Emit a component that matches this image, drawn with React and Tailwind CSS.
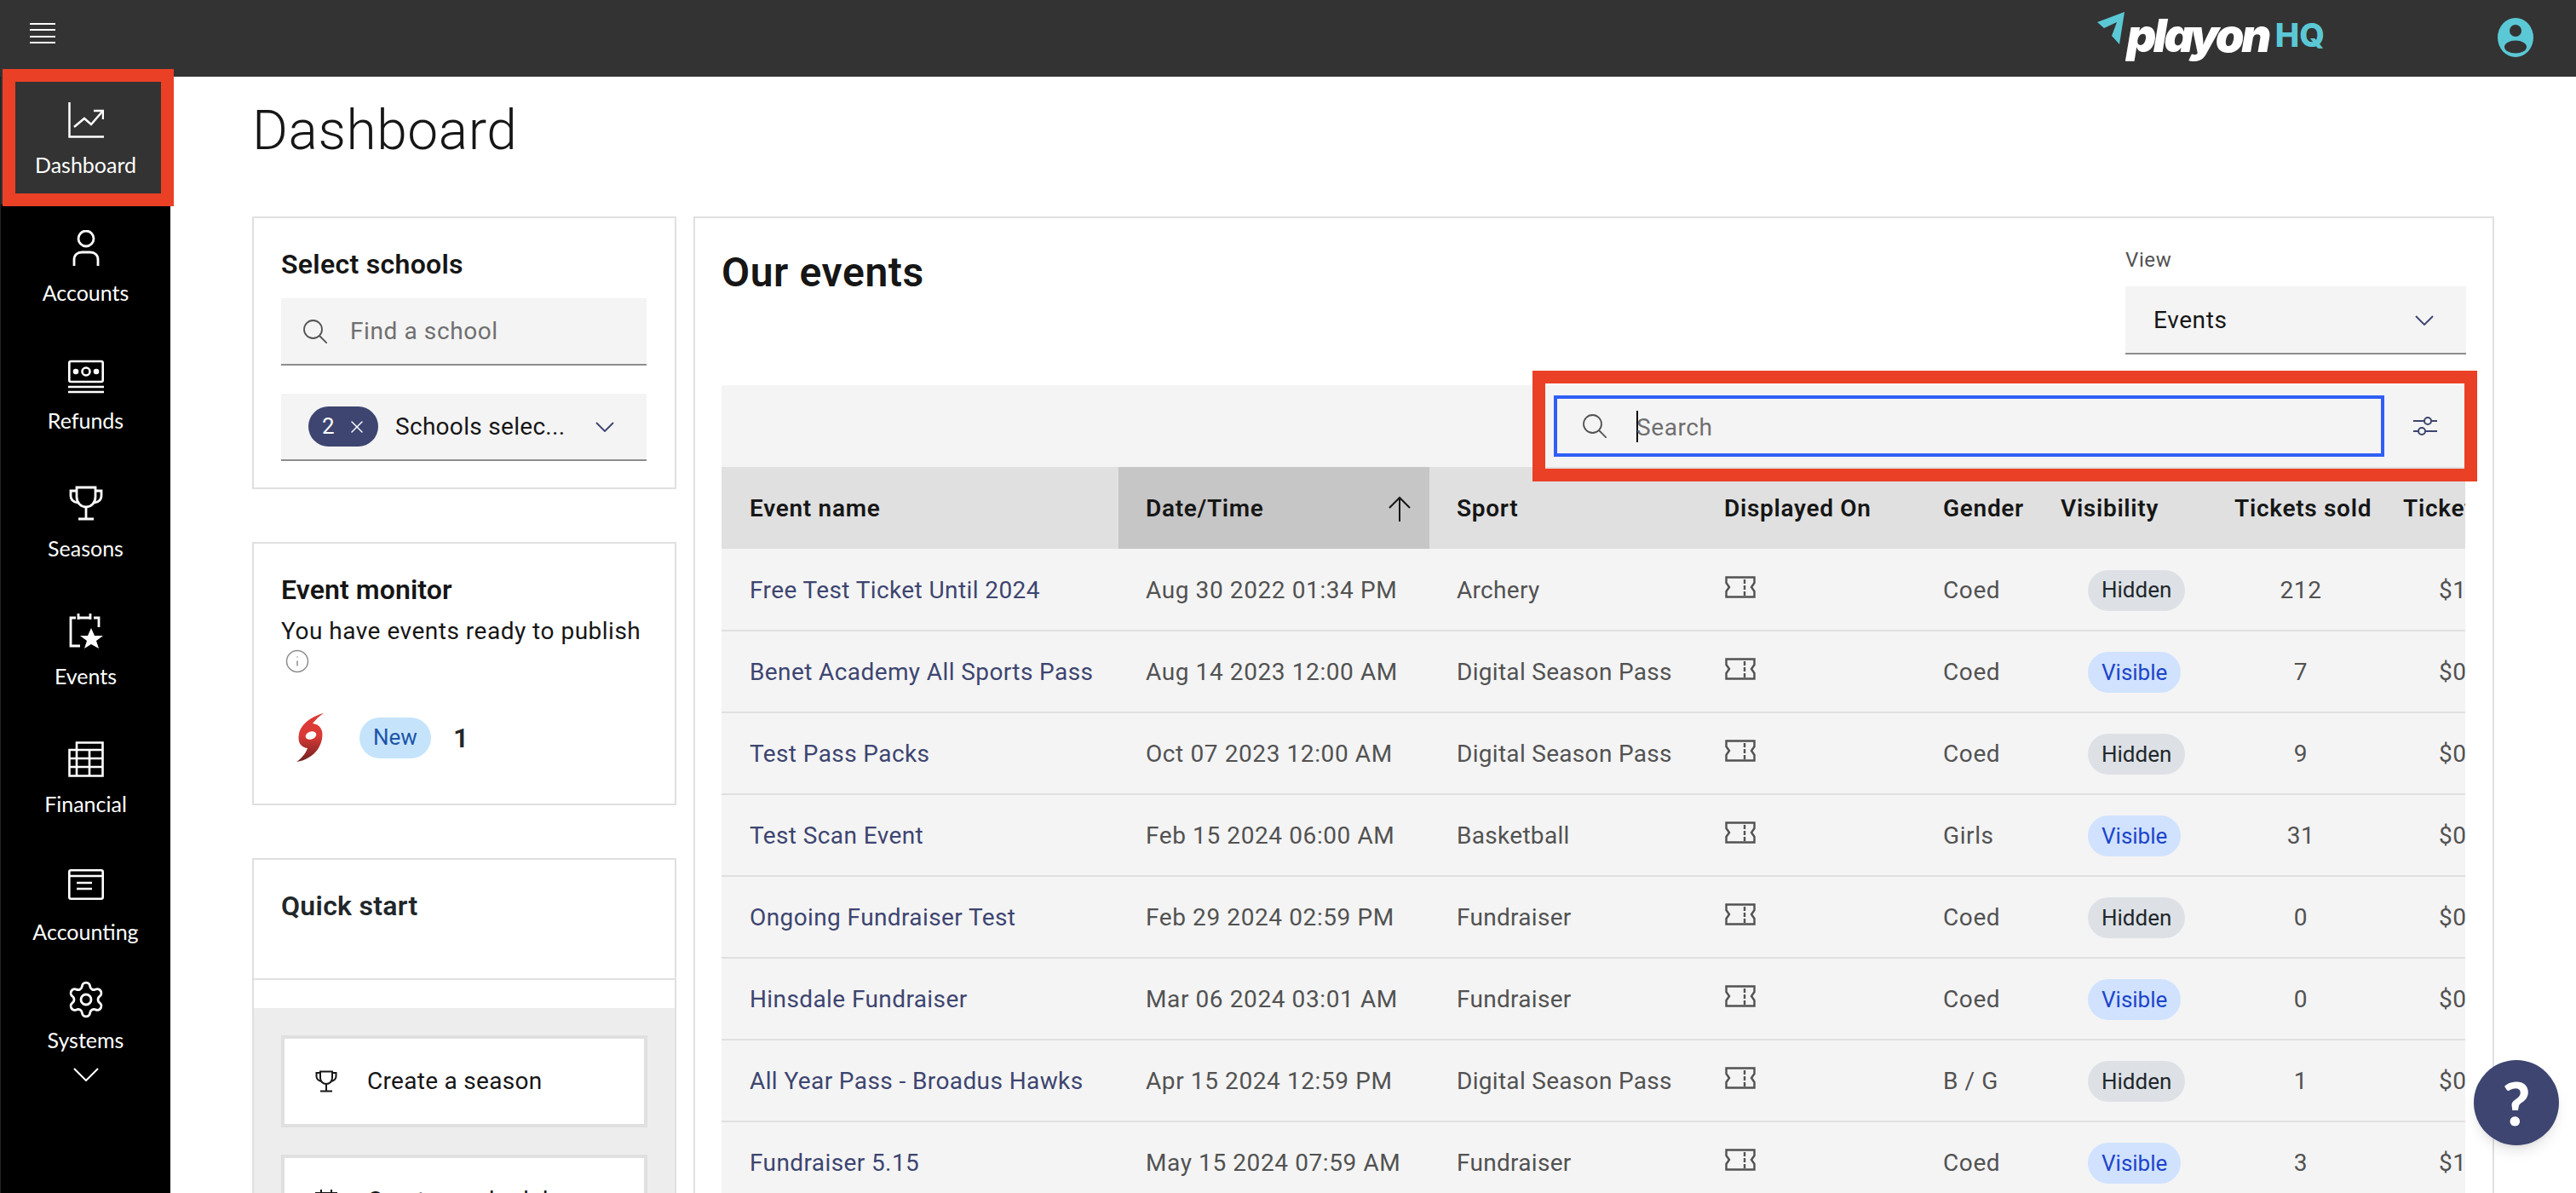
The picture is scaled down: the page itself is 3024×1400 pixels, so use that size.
import React from 'react'
import { Settings, X, Info } from 'lucide-react'

const plex = "font-['Roboto','Noto_Sans',sans-serif]"

const rows = [
  ['Free Test Ticket Until 2024', 'Aug 30 2022 01:34 PM', 'Archery', 'Coed', 'Hidden', '212', '$1'],
  ['Benet Academy All Sports Pass', 'Aug 14 2023 12:00 AM', 'Digital Season Pass', 'Coed', 'Visible', '7', '$0'],
  ['Test Pass Packs', 'Oct 07 2023 12:00 AM', 'Digital Season Pass', 'Coed', 'Hidden', '9', '$0'],
  ['Test Scan Event', 'Feb 15 2024 06:00 AM', 'Basketball', 'Girls', 'Visible', '31', '$0'],
  ['Ongoing Fundraiser Test', 'Feb 29 2024 02:59 PM', 'Fundraiser', 'Coed', 'Hidden', '0', '$0'],
  ['Hinsdale Fundraiser', 'Mar 06 2024 03:01 AM', 'Fundraiser', 'Coed', 'Visible', '0', '$0'],
  ['All Year Pass - Broadus Hawks', 'Apr 15 2024 12:59 PM', 'Digital Season Pass', 'B / G', 'Hidden', '1', '$0'],
  ['Fundraiser 5.15', 'May 15 2024 07:59 AM', 'Fundraiser', 'Coed', 'Visible', '3', '$1'],
]

const DashIcon = () => (
  <svg width="42" height="42" viewBox="0 0 42 42" fill="none" stroke="white" strokeWidth="2.5">
    <path d="M1.5 0V40.5H42" />
    <path d="M7 29L19 19L27 26L40 11" />
    <path d="M30 10H41V20" />
  </svg>
)

const AccountIcon = () => (
  <svg width="42" height="42" viewBox="0 0 42 42" fill="none" stroke="white" strokeWidth="2.8">
    <circle cx="21" cy="10" r="9" />
    <path d="M7 42V35C7 29 11 26 16 26H26C31 26 35 29 35 35V42" />
  </svg>
)

const RefundIcon = () => (
  <svg width="42" height="42" viewBox="0 0 42 42" fill="none" stroke="white" strokeWidth="2.6">
    <rect x="1.3" y="4" width="39.4" height="24" rx="2" />
    <circle cx="21" cy="16" r="4.5" />
    <circle cx="9" cy="16" r="2" fill="white" />
    <circle cx="33" cy="16" r="2" fill="white" />
    <path d="M0 34H42M0 40H42" />
  </svg>
)

const TrophyIcon = () => (
  <svg width="42" height="42" viewBox="0 0 42 42" fill="none" stroke="white" strokeWidth="2.8">
    <path d="M10 2H32V13C32 20 27 25 21 25C15 25 10 20 10 13Z" />
    <path d="M10 6H3V12C3 16 6 19 11 20M32 6H39V12C39 16 36 19 31 20" />
    <path d="M21 25V38M12 39H30" />
  </svg>
)

const EventIcon = () => (
  <svg width="42" height="42" viewBox="0 0 42 42" fill="none" stroke="white" strokeWidth="2.8">
    <path d="M9 5H3V38H14M30 5H36V16M12 0V7M26 0V7M12 5H26" />
    <path d="M27 17L31 26L41 26L33 32L36 41L27 36L19 41L22 32L14 26L23 26Z" fill="white" stroke="none" />
  </svg>
)

const TableIcon = () => (
  <svg width="42" height="42" viewBox="0 0 42 42" fill="none" stroke="white" strokeWidth="2.6">
    <path d="M10 1.5H40.5V40.5H1.5V10H10ZM10 10H40.5M1.5 20H40.5M1.5 30H40.5M10 10V40.5M25 10V40.5" />
  </svg>
)

const AccountingIcon = () => (
  <svg width="42" height="36" viewBox="0 0 42 36" fill="none" stroke="white" strokeWidth="2.6">
    <rect x="1.3" y="1.3" width="39.4" height="33.4" rx="2" />
    <path d="M1 8H41M10 16H28M10 23H28" />
  </svg>
)

const TicketIcon = () => (
  <svg width="36" height="26" viewBox="0 0 36 26" fill="none" stroke="#525252" strokeWidth="2.4">
    <path d="M1.5 1.5H34.5V8L31 13L34.5 18V24.5H1.5V18L5 13L1.5 8Z" />
    <path d="M23 4V9M23 11V16M23 18V23" />
  </svg>
)

const SliderIcon = () => (
  <svg width="28" height="26" viewBox="0 0 28 26" fill="none" stroke="#3d4570" strokeWidth="2">
    <path d="M0 7H13M21 7H28M0 19H6M14 19H28" />
    <circle cx="17" cy="7" r="4" />
    <circle cx="10" cy="19" r="4" />
  </svg>
)

const SearchIcon = () => (
  <svg width="28" height="28" viewBox="0 0 28 28" fill="none" stroke="#525252" strokeWidth="1.8" className="shrink-0">
    <circle cx="11.5" cy="11.5" r="10.5" />
    <path d="M19 19L28 28" />
  </svg>
)

const Chevron = () => (
  <svg width="22" height="12" viewBox="0 0 22 12" fill="none" stroke="#3d4570" strokeWidth="1.9" className="shrink-0">
    <path d="M1 1L11 11L21 1" />
  </svg>
)

const SortArrow = () => (
  <svg width="26" height="30" viewBox="0 0 26 30" fill="none" stroke="#161616" strokeWidth="2" className="shrink-0">
    <path d="M13 30V2M1 14L13 2L25 14" />
  </svg>
)

const SmallTrophy = () => (
  <svg width="26" height="26" viewBox="0 0 26 26" fill="none" stroke="#161616" strokeWidth="2">
    <path d="M6 1.5H20V9C20 13 17 16 13 16C9 16 6 13 6 9Z" />
    <path d="M6 3H1.5V7C1.5 10 3.5 12 7 13M20 3H24.5V7C24.5 10 22.5 12 19 13" />
    <path d="M13 16V24M6 24.5H20" />
  </svg>
)

const SmallCalendar = () => (
  <svg width="26" height="26" viewBox="0 0 26 26" fill="none" stroke="#161616" strokeWidth="2">
    <rect x="1" y="4" width="24" height="21" />
    <path d="M1 10H25M7 0V6M19 0V6" />
  </svg>
)

const Hurricane = () => (
  <svg width="32" height="57" viewBox="0 0 32 57">
    <defs>
      <linearGradient id="swirl" x1="0" y1="0" x2="0" y2="1">
        <stop offset="0.45" stopColor="#dc3a36" />
        <stop offset="1" stopColor="#6e2222" />
      </linearGradient>
    </defs>
    <path d="M32 0C20 3 6 11 3 24C1 34 5 40 13 41C11 47 6 53 0 57C14 55 27 46 30 30C32 20 28 13 19 12C23 7 27 3 32 0Z" fill="url(#swirl)" />
    <ellipse cx="17" cy="26" rx="6.5" ry="4.5" transform="rotate(-20 17 26)" fill="white" />
  </svg>
)

const navItems = [
  ['Dashboard', DashIcon],
  ['Accounts', AccountIcon],
  ['Refunds', RefundIcon],
  ['Seasons', TrophyIcon],
  ['Events', EventIcon],
  ['Financial', TableIcon],
  ['Accounting', AccountingIcon],
]

const Sidebar = () => (
  <div className="w-[200px] h-[1310px] shrink-0 bg-black border-l border-[#222] font-['Lato',sans-serif] text-white text-[25px] tracking-normal">
    {navItems.map(([label, Icon], i) => (
      <div key={label} className={`h-[150px] pt-[30px] flex flex-col items-center ${i === 0 ? 'bg-[#333333]' : ''}`}>
        <div className="h-[42px]"><Icon /></div>
        <div className="mt-[16px] leading-[30px]">{label}</div>
      </div>
    ))}
    <div className="pt-[9px] flex flex-col items-center">
      <Settings size={48} strokeWidth={1.4} color="white" />
      <div className="leading-[30px] mt-[8px]">Systems</div>
      <svg width="30" height="16" viewBox="0 0 30 16" fill="none" stroke="white" strokeWidth="2" className="mt-[18px]">
        <path d="M1 1L15 15L29 1" />
      </svg>
    </div>
  </div>
)

const Badge = ({ value }) => (
  <span className={`inline-flex items-center h-[48px] px-[16px] rounded-[24px] text-[26px] tracking-normal ${value === 'Hidden' ? 'bg-[#dde1e6] text-[#21272a]' : 'bg-[#d0e2ff] text-[#1d45c9]'}`}>
    {value}
  </span>
)

const EventsTable = () => (
  <div className="w-[2047px] overflow-hidden">
    <table className="table-fixed w-[2240px] text-[28px]">
      <colgroup>
        <col className="w-[466px]" />
        <col className="w-[365px]" />
        <col className="w-[314px]" />
        <col className="w-[257px]" />
        <col className="w-[138px]" />
        <col className="w-[204px]" />
        <col className="w-[198px]" />
        <col className="w-[298px]" />
      </colgroup>
      <thead>
        <tr className="h-[96px] bg-[#e0e0e0] text-[#161616] text-left tracking-[0.7px]">
          <th className="px-[33px] pt-[2px] font-semibold">Event name</th>
          <th className="px-[32px] pt-[2px] font-semibold bg-[#c6c6c6]">
            <div className="flex items-center justify-between -mr-[10px]">
              Date/Time
              <SortArrow />
            </div>
          </th>
          <th className="px-[32px] pt-[2px] font-semibold">Sport</th>
          <th className="px-[32px] pt-[2px] font-semibold whitespace-nowrap">Displayed On</th>
          <th className="px-[32px] pt-[2px] font-semibold">Gender</th>
          <th className="px-[32px] pt-[2px] font-semibold">Visibility</th>
          <th className="px-[32px] pt-[2px] font-semibold whitespace-nowrap">Tickets sold</th>
          <th className="px-[32px] pt-[2px] font-semibold whitespace-nowrap">Ticket revenue</th>
        </tr>
      </thead>
      <tbody>
        {rows.map((r) => (
          <tr key={r[0]} className="h-[96px] bg-[#f4f4f4] text-[#525252]">
            <td className="px-[33px] pt-[2px] border-b-2 border-[#e0e0e0] text-[#3d4570] whitespace-nowrap tracking-[0.4px]">{r[0]}</td>
            <td className="px-[32px] pt-[2px] border-b-2 border-[#e0e0e0] whitespace-nowrap">{r[1]}</td>
            <td className="px-[32px] pt-[2px] border-b-2 border-[#e0e0e0] whitespace-nowrap tracking-[0.3px]">{r[2]}</td>
            <td className="px-[33px] border-b-2 border-[#e0e0e0]"><div className="-mt-[6px]"><TicketIcon /></div></td>
            <td className="px-[32px] pt-[2px] border-b-2 border-[#e0e0e0]">{r[3]}</td>
            <td className="pl-[64px] pt-[2px] border-b-2 border-[#e0e0e0]"><Badge value={r[4]} /></td>
            <td className="pl-[22px] pt-[2px] border-b-2 border-[#e0e0e0] text-center">{r[5]}</td>
            <td className="px-[74px] pt-[2px] border-b-2 border-[#e0e0e0]">{r[6]}</td>
          </tr>
        ))}
      </tbody>
    </table>
  </div>
)

const Card = ({ className, children }) => (
  <div className={`border-2 border-[#e0e0e0] bg-white ${className}`}>{children}</div>
)

const LeftColumn = () => (
  <div className="w-[498px] shrink-0 flex flex-col">
    <Card className="h-[320px] px-[32px] pt-[34px]">
      <div className="text-[32px] font-semibold leading-[40px] text-[#161616] tracking-[0.3px]">Select schools</div>
      <div className="mt-[20px] h-[79px] bg-[#f4f4f4] border-b-2 border-[#8d8d8d] w-[429px] flex items-center pl-[26px] text-[28px] text-[#6f6f6f]">
        <SearchIcon />
        <span className="ml-[27px]">Find a school</span>
      </div>
      <div className="mt-[33px] h-[79px] bg-[#f4f4f4] border-b-2 border-[#8d8d8d] w-[429px] flex items-center pl-[32px] text-[28px] text-[#161616]">
        <span className="h-[47px] w-[82px] rounded-full bg-[#3d4570] text-white flex items-center pl-[16px] text-[26px]">
          2
          <X size={24} strokeWidth={1.4} color="white" className="ml-[14px]" />
        </span>
        <span className="ml-[20px] tracking-[0.3px]">Schools selec...</span>
        <span className="ml-[36px]"><Chevron /></span>
      </div>
    </Card>
    <Card className="mt-[62px] h-[309px] px-[32px] pt-[34px]">
      <div className="text-[32px] font-semibold leading-[40px] text-[#161616] tracking-[0.1px]">Event monitor</div>
      <div className="mt-[11px] text-[28px] leading-[36px] text-[#161616] whitespace-nowrap tracking-[0.5px]">You have events ready to publish</div>
      <Info size={30} strokeWidth={1.2} color="#8d8d8d" className="ml-[4px] mt-[2px]" />
      <div className="mt-[46px] flex items-center pl-[18px]">
        <Hurricane />
        <span className="ml-[42px] h-[48px] px-[16px] rounded-full bg-[#c5e4fb] text-[#1d55a8] text-[26px] flex items-center tracking-normal">New</span>
        <span className="ml-[26px] text-[32px] font-semibold text-[#21272a]">1</span>
      </div>
    </Card>
    <Card className="mt-[62px] h-[600px]">
      <div className="h-[141px] border-b-2 border-[#e0e0e0] px-[32px] pt-[34px] text-[32px] font-semibold leading-[40px] text-[#21272a] tracking-[0.3px]">Quick start</div>
      <div className="mt-[33px] bg-[#ededed] h-[420px] px-[32px] pt-[32px] flex flex-col gap-[32px]">
        <div className="h-[108px] bg-white border-4 border-[#e0e0e0] flex items-center pl-[36px] gap-[35px] text-[28px] text-[#161616] tracking-[0.3px]">
          <SmallTrophy />
          <span>Create a season</span>
        </div>
        <div className="h-[108px] bg-white border-4 border-[#e0e0e0] flex items-center pl-[36px] gap-[35px] text-[28px] text-[#161616] tracking-[0.3px]">
          <SmallCalendar />
          <span>Create a schedule</span>
        </div>
      </div>
    </Card>
  </div>
)

const EventsCard = () => (
  <Card className="ml-[20px] w-[2114px] h-[1200px] px-[31px]">
    <div className="h-[196px] flex justify-between">
      <h2 className="pt-[38px] text-[48px] font-semibold leading-[52px] text-[#161616]">Our events</h2>
      <div className="pt-[34px] w-[400px]">
        <div className="text-[24px] leading-[30px] text-[#525252]">View</div>
        <div className="mt-[16px] h-[80px] bg-[#f4f4f4] border-b-2 border-[#8d8d8d] flex items-center justify-between pl-[33px] pr-[38px] pt-[2px] text-[28px] text-[#161616]">
          Events
          <Chevron />
        </div>
      </div>
    </div>
    <div className="h-[96px] bg-[#f4f4f4] flex items-center justify-end">
      <div className="w-[975px] h-[72px] border-4 border-[#2f5ff5] flex items-center pl-[30px] text-[28px] text-[#6f6f6f]">
        <SearchIcon />
        <span className="ml-[35px] w-[2px] h-[37px] bg-black" />
        <span className="-ml-[2px] pt-[4px]">Search</span>
      </div>
      <div className="w-[96px] flex justify-center"><SliderIcon /></div>
    </div>
    <EventsTable />
  </Card>
)

const Logo = () => (
  <div className="flex items-center">
    <svg width="32" height="38" viewBox="0 0 32 38" className="-mt-[24px] mr-[2px]">
      <path d="M0 12L32 0L26 38L17 28L23 12L8 19Z" fill="#5bc8d5" />
    </svg>
    <span className="font-['Inter',sans-serif] font-black italic text-white text-[54px] leading-none tracking-[-3.4px] -mt-[6px]">playon</span>
    <span className="ml-[8px] font-['Inter',sans-serif] font-extrabold text-[#5bc8d5] text-[38px] leading-none -mt-[8px] tracking-normal">HQ</span>
  </div>
)

const App = () => (
  <div className={`relative w-[3024px] h-[1400px] overflow-hidden bg-white tracking-[0.6px] ${plex}`}>
    <div className="h-[90px] bg-[#333333] flex items-center pl-[35px] pr-[50px]">
      <svg width="30" height="26" viewBox="0 0 30 26" fill="none" stroke="white" strokeWidth="2" className="-mt-[12px]">
        <path d="M0 2H30M0 9H30M0 17H30M0 24H30" />
      </svg>
      <div className="ml-auto mr-[203px]"><Logo /></div>
      <svg width="42" height="46" viewBox="0 0 42 46" className="-mt-[2px]">
        <ellipse cx="21" cy="23" rx="21" ry="23" fill="#5bc8d5" />
        <circle cx="21" cy="15" r="7" fill="#333333" />
        <ellipse cx="21" cy="34" rx="13" ry="7.5" fill="#333333" />
      </svg>
    </div>
    <div className="flex">
      <Sidebar />
      <div className="flex-1 pl-[96px]">
        <h1 className="h-[164px] pt-[29px] text-[64px] font-light leading-[70px] text-[#161616]">Dashboard</h1>
        <div className="flex items-start">
          <LeftColumn />
          <EventsCard />
        </div>
      </div>
    </div>
    {/* red annotation boxes */}
    <div className="absolute left-[3px] top-[81px] w-[201px] h-[161px] border-[15px] border-[#ea4025]" />
    <div className="absolute left-[1799px] top-[435px] w-[1109px] h-[130px] border-[15px] border-[#ea4025]" />
    <div className="absolute left-[2904px] top-[1244px] w-[100px] h-[100px] rounded-full bg-[#3d4570] shadow-lg flex items-center justify-center font-['Lato',sans-serif] font-black text-white text-[70px] tracking-normal">?</div>
  </div>
)

export default App
